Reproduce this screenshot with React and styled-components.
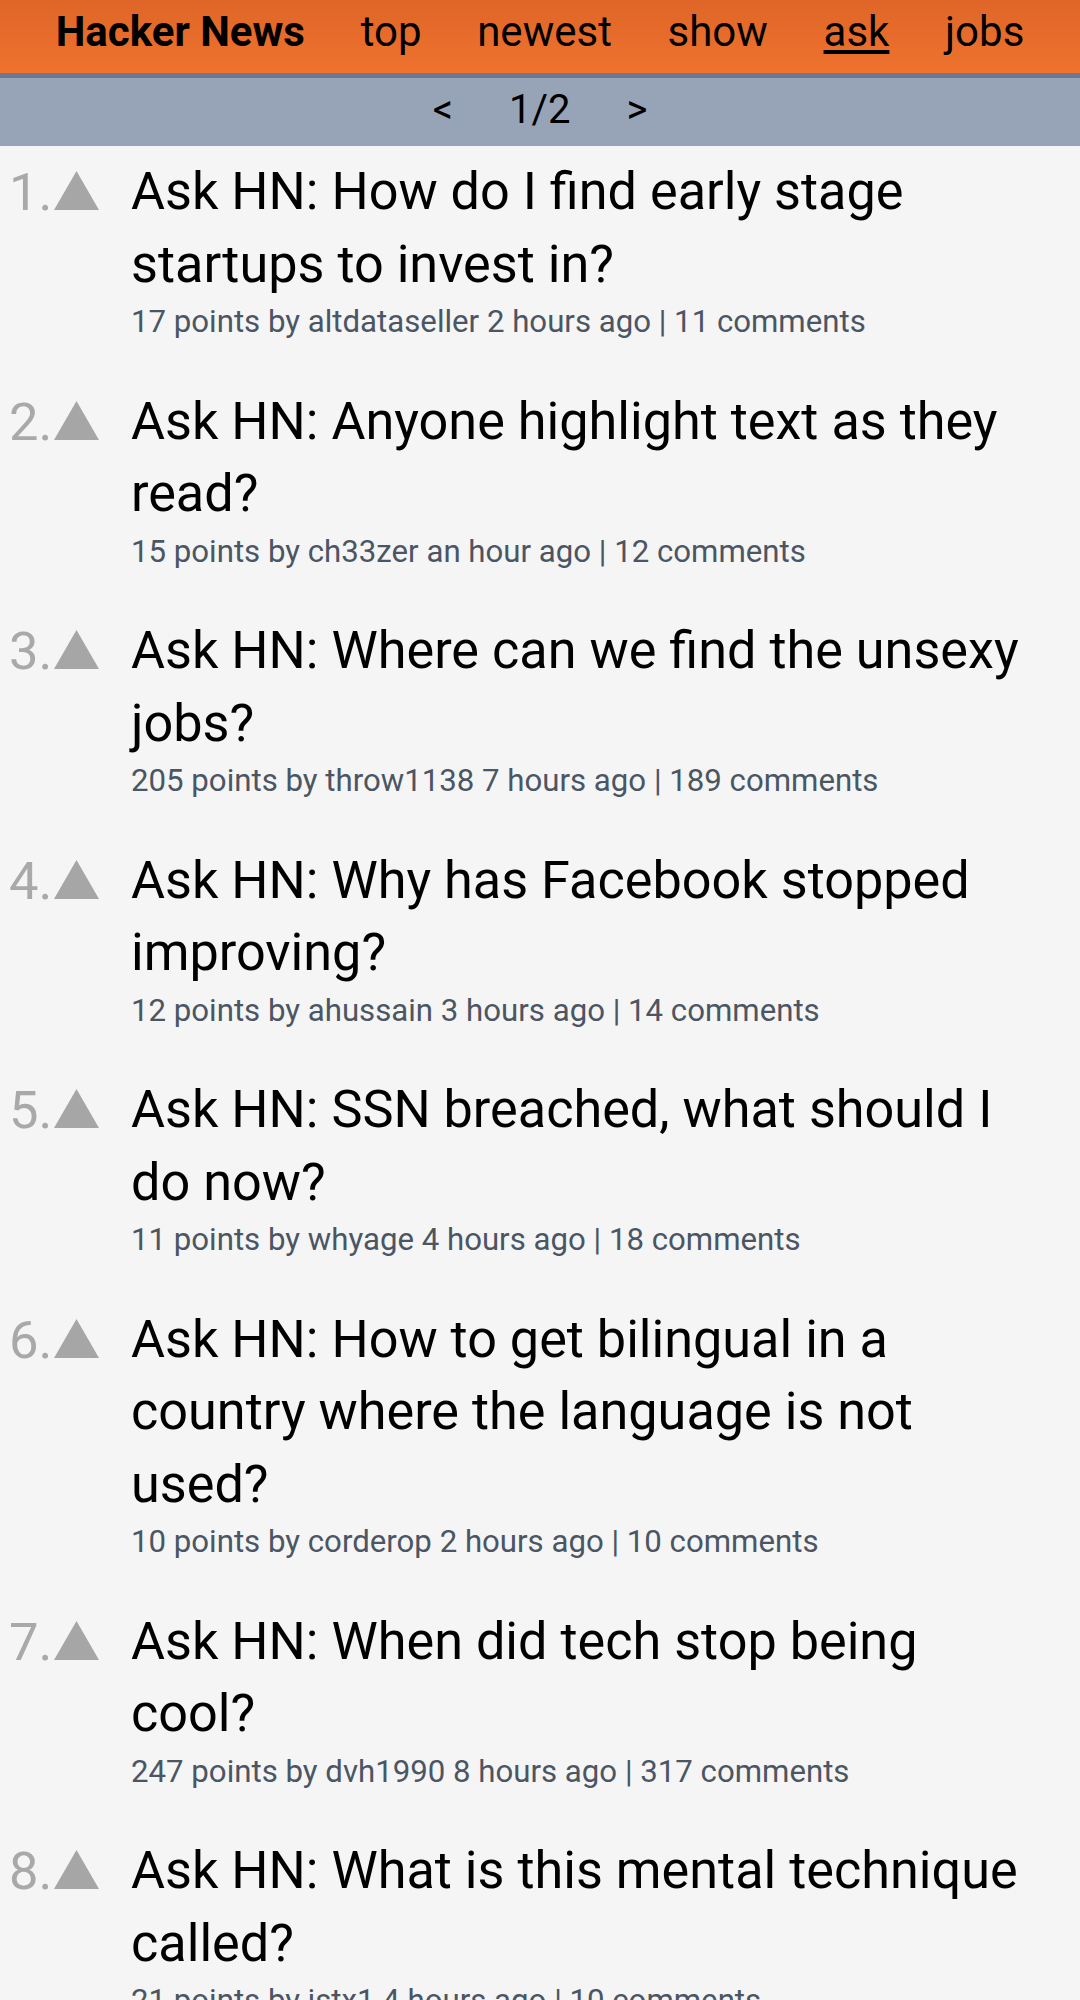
import React from "react";
import styled, { createGlobalStyle } from "styled-components";

const GlobalStyle = createGlobalStyle`
  * { box-sizing: border-box; }
  body {
    margin: 0;
    background: #f5f5f5;
    font-family: Roboto, "Liberation Sans", Arial, sans-serif;
  }
`;

const TopBar = styled.nav`
  height: 78px;
  padding-top: 7px;
  display: flex;
  justify-content: space-evenly;
  align-items: flex-start;
  background: linear-gradient(#df6628, #ef722e);
  border-bottom: 5px solid #6b7990;
  font-size: 42px;
  line-height: 49px;
  color: #000;
`;

const Brand = styled.span`
  font-weight: 700;
`;

const NavLink = styled.span`
  font-weight: 400;
  text-decoration: ${({ active }) => (active ? "underline" : "none")};
  text-decoration-thickness: 4px;
  text-underline-offset: 4px;
`;

const Pager = styled.div`
  height: 68px;
  padding-top: 8px;
  display: flex;
  justify-content: center;
  gap: 56px;
  background: #97a3b6;
  font-size: 40px;
  line-height: 47px;
  color: #000;
`;

const List = styled.ol`
  list-style: none;
  margin: 0;
  padding: 10px 0 0;
  display: flex;
  flex-direction: column;
  gap: 42.5px;
`;

const Item = styled.li`
  display: flex;
  align-items: flex-start;
`;

const Rank = styled.div`
  flex: 0 0 131px;
  padding-left: 9px;
  font-size: 52.5px;
  line-height: 72.5px;
  color: #a9a9a9;
  white-space: nowrap;
`;

const Arrow = styled.svg`
  width: 45px;
  height: 39px;
  margin-left: 2px;
  vertical-align: baseline;
  fill: #a6a6a6;
`;

const Body = styled.div`
  flex: 1;
  padding-right: 45px;
`;

const Title = styled.div`
  font-size: 52.2px;
  line-height: 72.5px;
  color: #000;
`;

const Meta = styled.div`
  font-size: 31.2px;
  line-height: 42px;
  color: #4b5563;
`;

const stories = [
  { title: "Ask HN: How do I find early stage startups to invest in?", points: 17, by: "altdataseller", ago: "2 hours ago", comments: 11 },
  { title: "Ask HN: Anyone highlight text as they read?", points: 15, by: "ch33zer", ago: "an hour ago", comments: 12 },
  { title: "Ask HN: Where can we find the unsexy jobs?", points: 205, by: "throw1138", ago: "7 hours ago", comments: 189 },
  { title: "Ask HN: Why has Facebook stopped improving?", points: 12, by: "ahussain", ago: "3 hours ago", comments: 14 },
  { title: "Ask HN: SSN breached, what should I do now?", points: 11, by: "whyage", ago: "4 hours ago", comments: 18 },
  { title: "Ask HN: How to get bilingual in a country where the language is not used?", points: 10, by: "corderop", ago: "2 hours ago", comments: 10 },
  { title: "Ask HN: When did tech stop being cool?", points: 247, by: "dvh1990", ago: "8 hours ago", comments: 317 },
  { title: "Ask HN: What is this mental technique called?", points: 21, by: "jstx1", ago: "4 hours ago", comments: 10 },
];

const links = ["top", "newest", "show", "ask", "jobs"];

function Story({ rank, story }) {
  return (
    <Item>
      <Rank>
        {rank}.
        <Arrow viewBox="0 0 45 39">
          <polygon points="22.5,0 45,39 0,39" />
        </Arrow>
      </Rank>
      <Body>
        <Title>{story.title}</Title>
        <Meta>
          {story.points} points by {story.by} {story.ago} | {story.comments} comments
        </Meta>
      </Body>
    </Item>
  );
}

export default function App() {
  return (
    <>
      <GlobalStyle />
      <TopBar>
        <Brand>Hacker News</Brand>
        {links.map((l) => (
          <NavLink key={l} active={l === "ask"}>
            {l}
          </NavLink>
        ))}
      </TopBar>
      <Pager>
        <span>&lt;</span>
        <span>1/2</span>
        <span>&gt;</span>
      </Pager>
      <List>
        {stories.map((s, i) => (
          <Story key={i} rank={i + 1} story={s} />
        ))}
      </List>
    </>
  );
}
